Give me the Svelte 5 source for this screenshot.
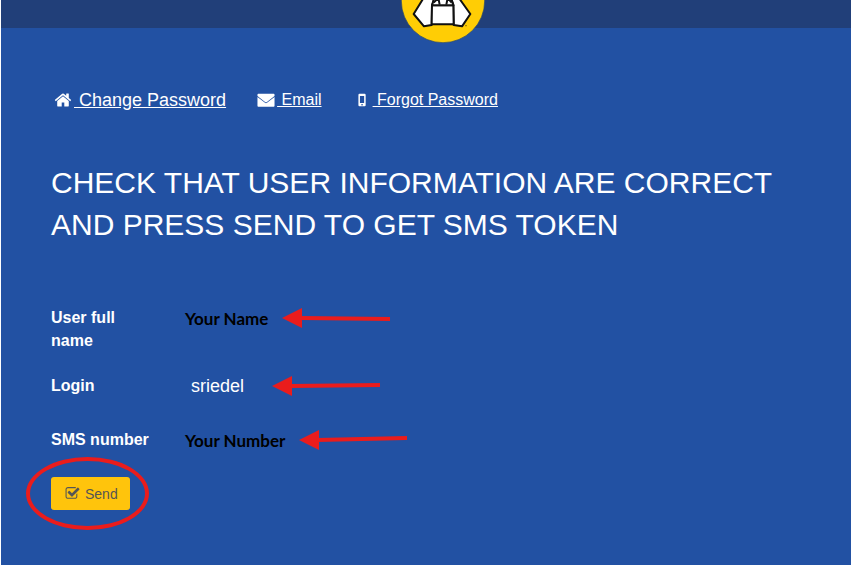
<script>
    const icons = {
        home: 'M1472 992v480q0 26-19 45t-45 19h-384v-384h-256v384h-384q-26 0-45-19t-19-45v-480q0-1 .5-3t.5-3l575-474 575 474q1 2 1 6zm223-69l-62 74q-8 9-21 11h-3q-13 0-21-7l-692-577-692 577q-12 8-24 7-13-2-21-11l-62-74q-8-10-7-23.5t11-21.5l719-599q32-26 76-26t76 26l244 204v-195q0-14 9-23t23-9h192q14 0 23 9t9 23v408l219 182q10 8 11 21.5t-7 23.5z',
        email: 'M130 280h1532q84 0 84 84v1112q0 84-84 84h-1532q-84 0-84-84v-1112q0-84 84-84zM46 500v90l750 590q100 70 200 0l750-590v-90l-790 610q-60 44-120 0z',
        mobile: 'M650 280h500q110 0 110 110v1020q0 110-110 110h-500q-110 0-110-110v-1020q0-110 110-110zM690 500v700h420v-700zM900 1290a75 75 0 1 0 1 0z',
        check: 'M1472 930v318q0 119-84.5 203.5t-203.5 84.5h-832q-119 0-203.5-84.5t-84.5-203.5v-832q0-119 84.5-203.5t203.5-84.5h832q63 0 117 25 15 7 18 23 3 17-9 29l-49 49q-10 10-23 10-3 0-9-2-23-6-45-6h-832q-66 0-113 47t-47 113v832q0 66 47 113t113 47h832q66 0 113-47t47-113v-254q0-13 9-22l64-64q10-10 23-10 6 0 12 3 20 8 20 29zm231-489l-814 814q-24 24-57 24t-57-24l-430-430q-24-24-24-57t24-57l110-110q24-24 57-24t57 24l263 263 647-647q24-24 57-24t57 24l110 110q24 24 24 57t-24 57z'
    }

    const links = [
        { text: 'Change Password', icon: 'home', active: true },
        { text: 'Email', icon: 'email' },
        { text: 'Forgot Password', icon: 'mobile' }
    ]

    const user = [
        { label: 'User full name', value: 'Your Name', note: true, arrowEnd: 11 },
        { label: 'Login', value: 'sriedel', arrowEnd: 9 },
        { label: 'SMS number', value: 'Your Number', note: true, arrowEnd: 8 }
    ]
</script>

{#snippet icon(name)}
    <svg class="icon" viewBox="0 0 1792 1792" aria-hidden="true"><path d={icons[name]} /></svg>
{/snippet}

<div class="page">
    <header>
        <svg class="logo" viewBox="34 -123 252 252" role="img" aria-label="Logo">
            <circle cx="160" cy="3" r="125" fill="#ffcd05" stroke="#2b4a6b" stroke-width="2" />
            <g fill="#fff" stroke="#111" stroke-width="6" stroke-linejoin="round">
                <path d="M112 -26L98 0L72 42L103 79L126 75L127 16L140 -20Z" />
                <path d="M198 -26L212 0L242 42L217 79L192 75L191 14L178 -20Z" />
                <path d="M127 16H191L192 73H126Z" />
                <path d="M127 16L138 -20H180L191 16Z" />
                <path d="M132 8L146 -6L150 14M186 8L174 -6L170 14" fill="none" />
            </g>
            <circle cx="229" cy="77" r="2" fill="#5b4600" />
        </svg>
    </header>

    <main>
        <nav>
            {#each links as link}
                <a href="#{link.icon}" class:active={link.active}>
                    {@render icon(link.icon)}
                    <span class="linkText">&nbsp;{link.text}</span>
                </a>
            {/each}
        </nav>

        <h1>CHECK THAT USER INFORMATION ARE CORRECT AND PRESS SEND TO GET SMS TOKEN</h1>

        <dl>
            {#each user as row}
                <div class="row">
                    <dt>{row.label}</dt>
                    <dd>
                        <span class="value" class:note={row.note}>{row.value}</span>
                        <svg class="arrow" viewBox="0 0 108 20" aria-hidden="true">
                            <path d="M0 10L20 0V20Z" fill="#ea1c1c" />
                            <path d="M18 10L108 {row.arrowEnd}" stroke="#ea1c1c" stroke-width="4" />
                        </svg>
                    </dd>
                </div>
            {/each}
        </dl>

        <div class="send">
            <button type="submit">{@render icon('check')} Send</button>
            <span class="ring"></span>
        </div>
    </main>
</div>

<style>
    :global(body) {
        background-color: #2251a3;
    }

    .page {
        min-height: 100vh;
        box-sizing: border-box;
        border-left: 1px solid white;
        background-color: #2251a3;
        color: white;
        font-family: "Liberation Sans", Arial, sans-serif;
        font-size: 16px;
    }

    header {
        position: relative;
        height: 28px;
        background-color: #213f79;
    }

    .logo {
        position: absolute;
        bottom: -15px;
        left: 52%;
        width: 84px;
        height: 84px;
        margin-left: -42px;
    }

    main {
        padding: 60px 50px 32px;
    }

    nav {
        display: flex;
        align-items: center;
        gap: 31px;
        height: 24px;
        padding-left: 3px;
    }

    nav a {
        display: flex;
        align-items: center;
        gap: 2px;
        color: white;
        text-decoration: none;
    }

    .active {
        font-size: 18px;
    }

    .linkText {
        text-decoration: underline;
    }

    .icon {
        width: 18px;
        height: 18px;
        fill: currentColor;
        fill-rule: evenodd;
    }

    h1 {
        margin: 50px 0 60px;
        font-size: 30px;
        font-weight: normal;
        line-height: 42px;
    }

    dl {
        display: grid;
        gap: 22px;
        margin: 0 0 17px;
    }

    .row {
        display: flex;
        align-items: flex-start;
        min-height: 32px;
    }

    dt {
        flex: none;
        box-sizing: border-box;
        width: 134px;
        padding-right: 32px;
        font-weight: bold;
        line-height: 23px;
    }

    dd {
        display: flex;
        align-items: center;
        gap: 12px;
        height: 24px;
        margin: 0;
    }

    .value {
        padding: 0 16px 0 6px;
        font-size: 18px;
    }

    .note {
        padding: 0 2px 0 0;
        color: black;
        font-family: Lato, sans-serif;
        font-size: 17px;
        font-weight: bold;
    }

    .arrow {
        width: 108px;
        height: 20px;
    }

    .send {
        position: relative;
        width: fit-content;
    }

    button {
        display: flex;
        align-items: center;
        gap: 5px;
        height: 33px;
        padding: 0 12px 0 14px;
        border: none;
        border-radius: 3px;
        background-color: #ffc40c;
        color: #555;
        font-family: inherit;
        font-size: 14px;
    }

    button .icon {
        width: 15px;
        height: 15px;
    }

    .ring {
        position: absolute;
        inset: -20px -19px -20px -25px;
        border: 4px solid #ea1c1c;
        border-radius: 50%;
        pointer-events: none;
    }
</style>
